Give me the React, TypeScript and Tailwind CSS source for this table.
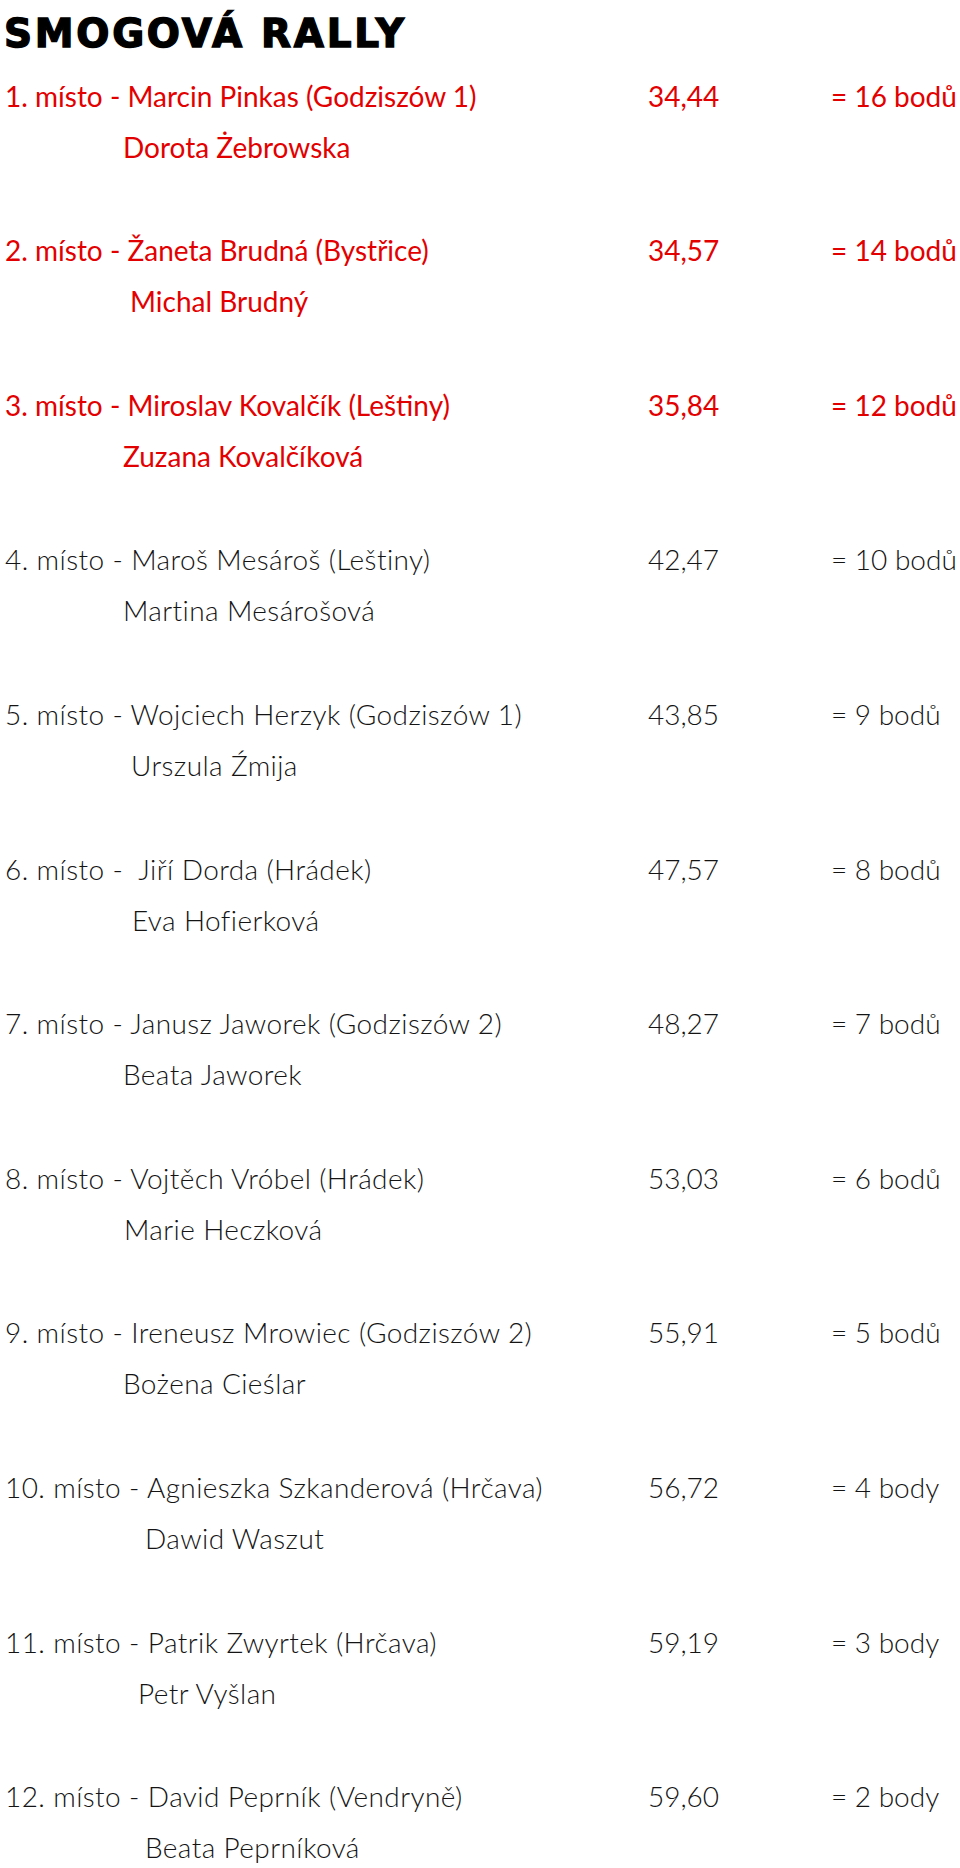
import React from 'react';

type Result = {
  place: string;
  partner: string;
  time: string;
  points: string;
  indent: string;
  red: boolean;
};

const RESULTS: Result[] = [
  { place: '1. místo - Marcin Pinkas (Godziszów 1)', partner: 'Dorota Żebrowska', time: '34,44', points: '= 16 bodů', indent: 'pl-[123px]', red: true },
  { place: '2. místo - Žaneta Brudná (Bystřice)', partner: 'Michal Brudný', time: '34,57', points: '= 14 bodů', indent: 'pl-[130px]', red: true },
  { place: '3. místo - Miroslav Kovalčík (Leštiny)', partner: 'Zuzana Kovalčíková', time: '35,84', points: '= 12 bodů', indent: 'pl-[123px]', red: true },
  { place: '4. místo - Maroš Mesároš (Leštiny)', partner: 'Martina Mesárošová', time: '42,47', points: '= 10 bodů', indent: 'pl-[123px]', red: false },
  { place: '5. místo - Wojciech Herzyk (Godziszów 1)', partner: 'Urszula Źmija', time: '43,85', points: '= 9 bodů', indent: 'pl-[131px]', red: false },
  { place: '6. místo -  Jiří Dorda (Hrádek)', partner: 'Eva Hofierková', time: '47,57', points: '= 8 bodů', indent: 'pl-[132px]', red: false },
  { place: '7. místo - Janusz Jaworek (Godziszów 2)', partner: 'Beata Jaworek', time: '48,27', points: '= 7 bodů', indent: 'pl-[123px]', red: false },
  { place: '8. místo - Vojtěch Vróbel (Hrádek)', partner: 'Marie Heczková', time: '53,03', points: '= 6 bodů', indent: 'pl-[124px]', red: false },
  { place: '9. místo - Ireneusz Mrowiec (Godziszów 2)', partner: 'Bożena Cieślar', time: '55,91', points: '= 5 bodů', indent: 'pl-[123px]', red: false },
  { place: '10. místo - Agnieszka Szkanderová (Hrčava)', partner: 'Dawid Waszut', time: '56,72', points: '= 4 body', indent: 'pl-[145px]', red: false },
  { place: '11. místo - Patrik Zwyrtek (Hrčava)', partner: 'Petr Vyšlan', time: '59,19', points: '= 3 body', indent: 'pl-[138px]', red: false },
  { place: '12. místo - David Peprník (Vendryně)', partner: 'Beata Peprníková', time: '59,60', points: '= 2 body', indent: 'pl-[145px]', red: false },
];

export default function App() {
  return (
    <div className="w-[960px] min-h-[1868px] bg-white overflow-hidden">
      <h1 className="h-[67px] leading-[67px] pl-[4px] text-[39px] font-bold text-black font-['DejaVu_Sans',sans-serif] tracking-[2.7px] [-webkit-text-stroke:1.4px_black]">
        SMOGOVÁ RALLY
      </h1>

      <div className="pt-[3.7px] font-['Lato','Open_Sans',sans-serif] text-[28px]">
        {RESULTS.map((r, i) => (
          <div
            key={r.time}
            className={
              (r.red ? 'text-[#e30000] font-normal ' : 'text-[#141414] font-light ') +
              (i < RESULTS.length - 1 ? 'h-[154.6px]' : '')
            }
          >
            <div className="flex leading-[51px] whitespace-pre">
              <div className={'w-[648px] pl-[5px] ' + (r.red ? '' : 'tracking-[0.4px]')}>{r.place}</div>
              <div className="w-[183px]">{r.time}</div>
              <div>{r.points}</div>
            </div>
            <div className={'leading-[51px] ' + r.indent + (r.red ? '' : ' tracking-[0.4px]')}>{r.partner}</div>
          </div>
        ))}
      </div>
    </div>
  );
}
